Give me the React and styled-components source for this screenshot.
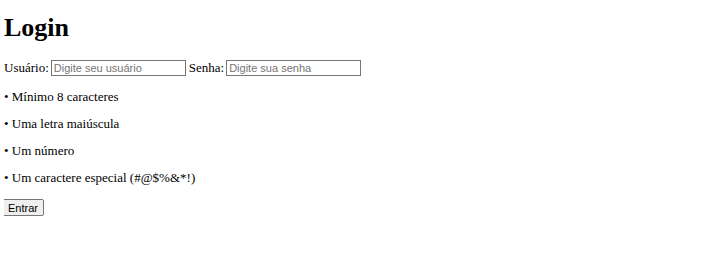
import React from 'react';
import styled, { createGlobalStyle } from 'styled-components';

const GlobalStyle = createGlobalStyle`
  body {
    margin: 4px;
    background: #fff;
    color: #000;
    font-family: "Liberation Serif", "Times New Roman", serif;
    font-size: 13px;
  }
`;

const Title = styled.h1`
  font-size: 26px;
  font-weight: bold;
  margin: 9px 0 17px;
`;

const FormRow = styled.div`
  display: flex;
  align-items: center;
  gap: 3px;
`;

const Field = styled.label`
  display: flex;
  align-items: center;
  gap: 2px;
`;

const TextInput = styled.input`
  box-sizing: border-box;
  width: 135px;
  height: 16px;
  padding: 0 2px;
  border: 1px solid #767676;
  font-family: "Liberation Sans", Arial, sans-serif;
  font-size: 11px;
  &::placeholder {
    color: #757575;
  }
`;

const Rules = styled.div`
  margin-top: 13px;
  padding-bottom: 2px;
`;

const Rule = styled.p`
  margin: 0 0 12px;
  line-height: 15px;
`;

const SubmitButton = styled.button`
  box-sizing: border-box;
  height: 17px;
  padding: 0 5px;
  margin-left: -2px;
  border: 1px solid #767676;
  border-radius: 2px;
  background: #efefef;
  font-family: "Liberation Sans", Arial, sans-serif;
  font-size: 11px;
  color: #000;
`;

const rules = [
  'Mínimo 8 caracteres',
  'Uma letra maiúscula',
  'Um número',
  'Um caractere especial (#@$%&*!)',
];

export default function App() {
  return (
    <>
      <GlobalStyle />
      <Title>Login</Title>
      <FormRow>
        <Field>
          Usuário:
          <TextInput type="text" placeholder="Digite seu usuário" />
        </Field>
        <Field>
          Senha:
          <TextInput type="password" placeholder="Digite sua senha" />
        </Field>
      </FormRow>
      <Rules>
        {rules.map((r) => (
          <Rule key={r}>• {r}</Rule>
        ))}
      </Rules>
      <SubmitButton type="button">Entrar</SubmitButton>
    </>
  );
}
